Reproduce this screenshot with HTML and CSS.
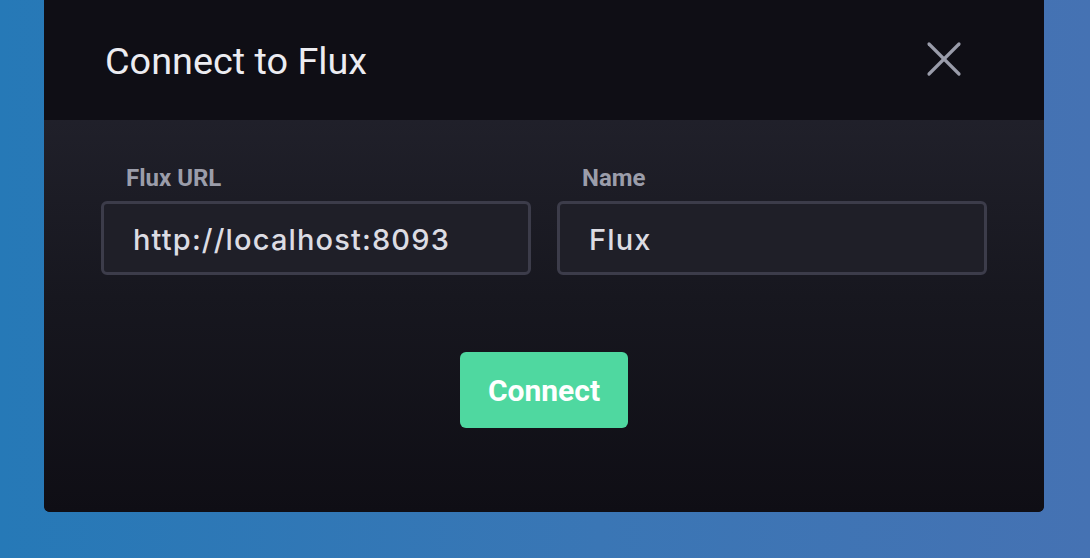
FILE: index.html
```html
<!DOCTYPE html>
<html lang="en">
<head>
<meta charset="utf-8">
<title>Connect to Flux</title>
<link rel="stylesheet" href="styles.css">
</head>
<body>
<div class="modal">
  <div class="modal-header">
    <h1 class="modal-title">Connect to Flux</h1>
    <button class="close-btn" aria-label="Close">
      <svg width="36" height="36" viewBox="0 0 36 36" fill="none" stroke="#9a9caa" stroke-width="3.2" stroke-linecap="round">
        <line x1="3" y1="3" x2="33" y2="33"/>
        <line x1="33" y1="3" x2="3" y2="33"/>
      </svg>
    </button>
  </div>
  <div class="modal-body">
    <div class="fields">
      <div class="field">
        <label class="field-label">Flux URL</label>
        <div class="input">http://localhost:8093</div>
      </div>
      <div class="field">
        <label class="field-label">Name</label>
        <div class="input">Flux</div>
      </div>
    </div>
    <div class="actions">
      <button class="connect-btn">Connect</button>
    </div>
  </div>
</div>
</body>
</html>
```

FILE: styles.css
```css
html, body {
  margin: 0;
  padding: 0;
}
body {
  width: 1090px;
  height: 558px;
  overflow: hidden;
  background: linear-gradient(to right, #2679b7 0%, #3a76b5 55%, #4572b3 100%);
  font-family: Roboto, "Liberation Sans", sans-serif;
}
.modal {
  width: 1000px;
  margin-left: 44px;
  height: 512px;
  display: flex;
  flex-direction: column;
  border-radius: 0 0 6px 6px;
  overflow: hidden;
  background: #0f0e15;
}
.modal-header {
  height: 120px;
  flex: none;
  display: flex;
  align-items: center;
  justify-content: space-between;
  padding: 0 82px 0 61px;
  background: #0f0e15;
}
.modal-title {
  margin: 0;
  font-size: 37.8px;
  font-weight: 400;
  color: #ececf1;
  line-height: 1;
  padding-top: 3px;
}
.close-btn {
  background: none;
  border: 0;
  padding: 0;
  width: 36px;
  height: 36px;
  display: flex;
  margin-top: -2px;
}
.modal-body {
  flex: 1;
  background: linear-gradient(to bottom, #20202a 0%, #17171f 45%, #0f0e15 100%);
  padding: 44px 57px 0;
  display: flex;
  flex-direction: column;
}
.fields {
  display: flex;
  gap: 26px;
}
.field {
  flex: 1;
  display: flex;
  flex-direction: column;
}
.field-label {
  font-size: 24px;
  font-weight: 700;
  color: #9b9daa;
  line-height: 28px;
  padding-left: 25px;
  margin-bottom: 9px;
}
.input {
  height: 74px;
  box-sizing: border-box;
  border: 3px solid #3c3c4a;
  border-radius: 6px;
  background: #1f1f28;
  color: #dcdce3;
  font-family: Inter, Roboto, sans-serif;
  font-size: 29px;
  font-weight: 500;
  letter-spacing: 1.15px;
  padding: 0 0 0 29px;
  display: flex;
  align-items: center;
  padding-top: 2px;
}
.actions {
  display: flex;
  justify-content: center;
  margin-top: 77px;
}
.connect-btn {
  height: 76px;
  width: 168px;
  border: 0;
  border-radius: 6px;
  background: #4fd8a0;
  color: #ffffff;
  font-family: Roboto, "Liberation Sans", sans-serif;
  font-size: 30px;
  font-weight: 700;
  padding: 0;
}
```
